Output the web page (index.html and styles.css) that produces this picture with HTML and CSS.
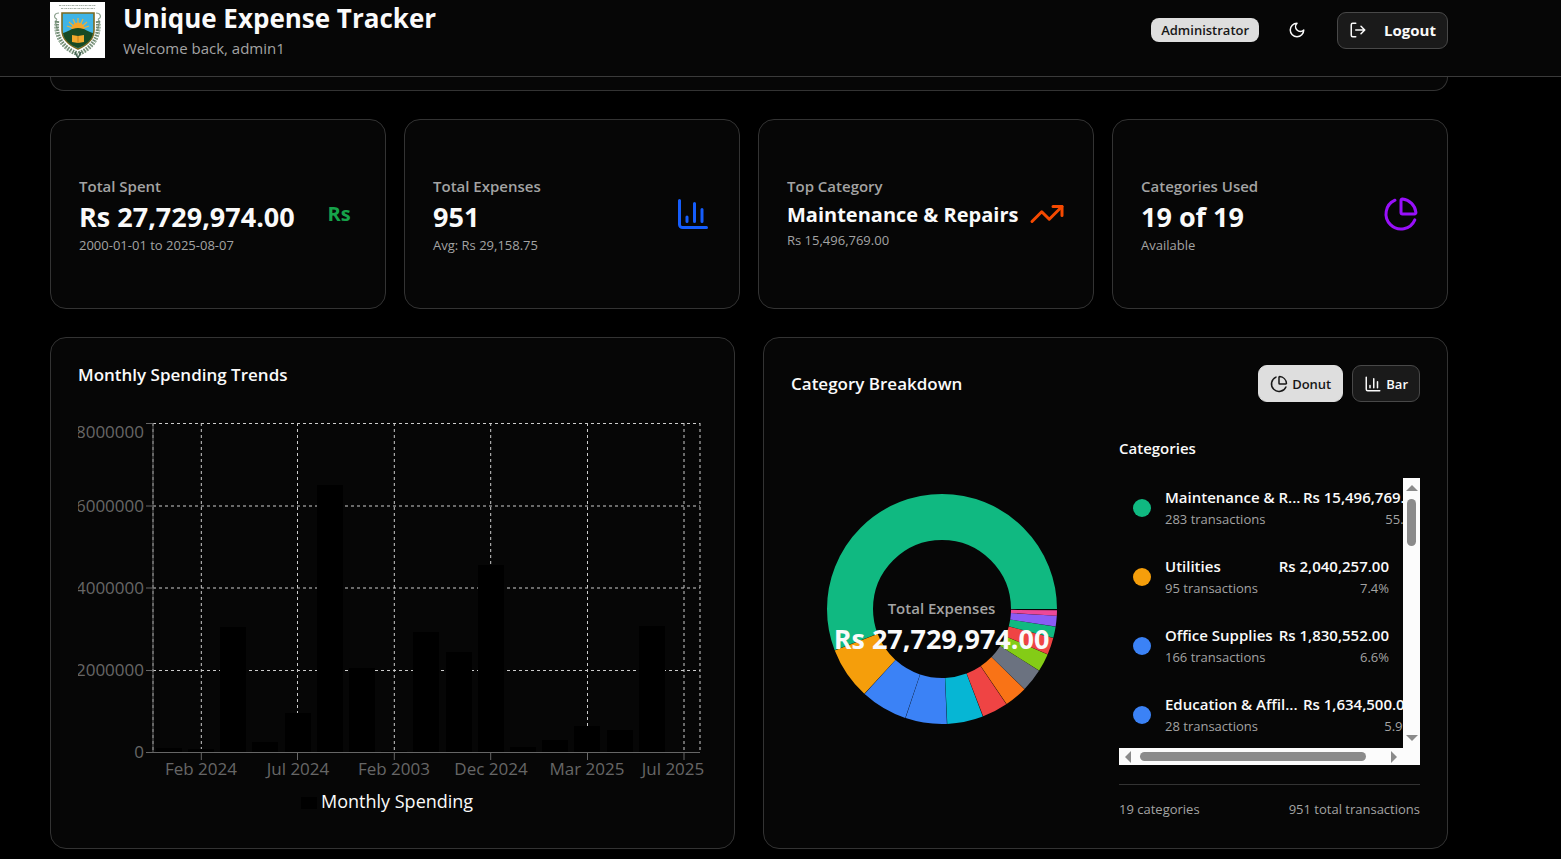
FILE: index.html
```html
<!DOCTYPE html>
<html lang="en">
<head>
<meta charset="utf-8">
<title>Unique Expense Tracker</title>
<meta name="viewport" content="width=device-width, initial-scale=1">
<link rel="stylesheet" href="styles.css">
</head>
<body>
<svg class="sprite" aria-hidden="true">
  <symbol id="i-bars" viewBox="0 0 24 24"><path d="M3 3v16a2 2 0 0 0 2 2h16M18 17V9M13 17V5M8 17v-3"/></symbol>
  <symbol id="i-pie" viewBox="0 0 24 24"><path d="M21 12c.552 0 1.005-.449.95-.998a10 10 0 0 0-8.953-8.951c-.55-.055-.998.398-.998.95v8a1 1 0 0 0 1 1z"/><path d="M21.21 15.89A10 10 0 1 1 8 2.83"/></symbol>
  <symbol id="i-trend" viewBox="0 0 24 24"><path d="M22 7l-8.5 8.5-5-5L2 17"/><path d="M16 7h6v6"/></symbol>
  <symbol id="i-moon" viewBox="0 0 24 24"><path d="M12 3a6 6 0 0 0 9 9 9 9 0 1 1-9-9Z"/></symbol>
  <symbol id="i-logout" viewBox="0 0 24 24"><path d="M9 21H5a2 2 0 0 1-2-2V5a2 2 0 0 1 2-2h4M16 17l5-5-5-5M21 12H9"/></symbol>
</svg>

<header class="topbar">
  <svg class="logo" viewBox="0 0 55 56" role="img" aria-label="School crest">
    <rect width="55" height="56" fill="#fff"/>
    <path d="M9 3.500h37M11 6.500h34" stroke="#a3afa4" stroke-width="1" stroke-dasharray="2 .7 1 .6"/>
    <g fill="none" stroke="#8fa391" stroke-width="1.200">
      <path d="M9 11c-5 0-6 5-2 6M46 11c5 0 6 5 2 6M7 17c-4 5 1 6 0 11M48 17c4 5-1 6 0 11"/>
    </g>
    <g fill="none" stroke="#6f8a72" stroke-width="4.500" stroke-dasharray="1.700 1.100">
      <path d="M7 19C5 34 12 46 28 52M48 19c2 15-5 27-20 33"/>
    </g>
    <g fill="none" stroke="#a9bcaa" stroke-width="1.500" stroke-dasharray="1 2">
      <path d="M5 22c0 13 6 23 18 29M50 22c0 13-6 23-18 29"/>
    </g>
    <path d="M25 50l3 6 3-6" fill="none" stroke="#3f5f50" stroke-width="1.500"/>
    <path d="M12 11h32v17c0 9-7 15-16 19-9-4-16-10-16-19z" fill="#3fb4e6" stroke="#7b6a20" stroke-width="1.600"/>
    <g stroke="#e9b23c" stroke-width="1.200"><path d="M28 28V16M28 28l-5-11M28 28l5-11M28 28l-9-8M28 28l9-8M28 28l-11-4M28 28l11-4"/></g>
    <circle cx="28" cy="27" r="6.500" fill="#f4a52a"/>
    <path d="M13 31c5-1 8-5 15-5s10 4 15 5c-1 7-7 12-15 15-8-3-14-8-15-15z" fill="#174a24"/>
    <path d="M22 33l6 1 6-1v7l-6 1-6-1z" fill="#f0a92d"/><path d="M28 34v7" stroke="#b77416" stroke-width=".8"/>
  </svg>
  <div class="brand">
    <h1>Unique Expense Tracker</h1>
    <p>Welcome back, admin1</p>
  </div>
  <span class="badge">Administrator</span>
  <button class="ghost" type="button" aria-label="Toggle theme"><svg class="icon"><use href="#i-moon"/></svg></button>
  <button class="btn logout" type="button"><svg class="icon"><use href="#i-logout"/></svg>Logout</button>
</header>

<main class="page">
  <div class="filters-end"></div>

  <section class="stats">
    <article class="card stat">
      <div><h3>Total Spent</h3><p class="value">Rs 27,729,974.00</p><p class="note">2000-01-01 to 2025-08-07</p></div>
      <span class="mark rupee">Rs</span>
    </article>
    <article class="card stat">
      <div><h3>Total Expenses</h3><p class="value">951</p><p class="note">Avg: Rs 29,158.75</p></div>
      <svg class="icon mark blue"><use href="#i-bars"/></svg>
    </article>
    <article class="card stat">
      <div><h3>Top Category</h3><p class="value small">Maintenance &amp; Repairs</p><p class="note">Rs 15,496,769.00</p></div>
      <svg class="icon mark orange"><use href="#i-trend"/></svg>
    </article>
    <article class="card stat">
      <div><h3>Categories Used</h3><p class="value">19 of 19</p><p class="note">Available</p></div>
      <svg class="icon mark purple"><use href="#i-pie"/></svg>
    </article>
  </section>

  <section class="panels">
    <article class="card panel">
      <h2>Monthly Spending Trends</h2>
      <svg class="trend" viewBox="0 0 629 408" role="img" aria-label="Monthly spending bar chart">
        <g class="grid">
          <path d="M75 17.500H622M75 100H622M75 182H622M75 264.500H622M75 346.500H622"/>
          <path d="M75 17V347M123.300 17V347M219.500 17V347M316.300 17V347M412.700 17V347M509.500 17V347M606 17V347M622 17V347"/>
        </g>
        <g class="axis"><path d="M75 17V347M75 346.500H622"/>
          <path d="M68 17.500h7M68 100h7M68 182h7M68 264.500h7M68 346.500h7M123.300 347v7M219.500 347v7M316.300 347v7M412.700 347v7M509.500 347v7M606 347v7"/></g>
        <g class="bars">
          <path d="M78 342h26v4H78zM110 343h26v3h-26zM142 221h26v125h-26zM174 336h26v10h-26zM207 307h26v39h-26zM239 79h26v267h-26zM271 262h26v84h-26zM303 345h26v1h-26zM335 226h26v120h-26zM368 246h26v100h-26zM400 159h26v187h-26zM432 341h26v5h-26zM464 334h26v12h-26zM496 320h26v26h-26zM529 324h26v22h-26zM561 220h26v126h-26z"/>
        </g>
        <g class="ticks end">
          <text x="66" y="32">8000000</text><text x="66" y="106">6000000</text><text x="66" y="188">4000000</text><text x="66" y="270">2000000</text><text x="66" y="352">0</text>
        </g>
        <g class="ticks mid">
          <text x="123" y="369">Feb 2024</text><text x="220" y="369">Jul 2024</text><text x="316" y="369">Feb 2003</text><text x="413" y="369">Dec 2024</text><text x="509" y="369">Mar 2025</text><text x="595" y="369">Jul 2025</text>
        </g>
        <rect class="key" x="223" y="391" width="16" height="12"/>
        <text class="legend" x="243" y="402">Monthly Spending</text>
      </svg>
    </article>

    <article class="card panel">
      <div class="panel-head">
        <h2>Category Breakdown</h2>
        <div class="toggle">
          <button class="btn chosen" type="button"><svg class="icon"><use href="#i-pie"/></svg>Donut</button>
          <button class="btn" type="button"><svg class="icon"><use href="#i-bars"/></svg>Bar</button>
        </div>
      </div>
      <div class="breakdown">
        <div class="donut">
          <svg viewBox="0 0 230 230" role="img" aria-label="Spending by category">
            <g class="ring" transform="translate(115 115) scale(1 -1)">
              <circle r="92" pathLength="360" stroke="#10b981" stroke-dasharray="201 159"/>
              <circle r="92" pathLength="360" stroke="#f59e0b" stroke-dasharray="26.300 333.700" stroke-dashoffset="-201.200"/>
              <circle r="92" pathLength="360" stroke="#3b82f6" stroke-dasharray="23.600 336.400" stroke-dashoffset="-227.700"/>
              <circle r="92" pathLength="360" stroke="#3b82f6" stroke-dasharray="21 339" stroke-dashoffset="-251.500"/>
              <circle r="92" pathLength="360" stroke="#06b6d4" stroke-dasharray="18.100 341.900" stroke-dashoffset="-272.700"/>
              <circle r="92" pathLength="360" stroke="#ef4444" stroke-dasharray="13 347" stroke-dashoffset="-291"/>
              <circle r="92" pathLength="360" stroke="#f97316" stroke-dasharray="11.600 348.400" stroke-dashoffset="-304.200"/>
              <circle r="92" pathLength="360" stroke="#6b7280" stroke-dasharray="11.600 348.400" stroke-dashoffset="-315.900"/>
              <circle r="92" pathLength="360" stroke="#84cc16" stroke-dasharray="9.100 350.900" stroke-dashoffset="-327.600"/>
              <circle r="92" pathLength="360" stroke="#ef4444" stroke-dasharray="8.500 351.500" stroke-dashoffset="-336.800"/>
              <circle r="92" pathLength="360" stroke="#10b981" stroke-dasharray="5.700 354.300" stroke-dashoffset="-345.400"/>
              <circle r="92" pathLength="360" stroke="#8b5cf6" stroke-dasharray="5.300 354.700" stroke-dashoffset="-351.200"/>
              <circle r="92" pathLength="360" stroke="#ec4899" stroke-dasharray="2.700 357.300" stroke-dashoffset="-356.600"/>
            </g>
          </svg>
          <div class="donut-label"><h3>Total Expenses</h3><p class="value">Rs 27,729,974.00</p></div>
        </div>

        <div class="categories">
          <h4>Categories</h4>
          <div class="scroller">
            <ul class="list">
              <li><i class="dot green"></i><div class="name"><b>Maintenance &amp; R...</b><span>283 transactions</span></div><div class="amount"><b>Rs 15,496,769.00</b><span>55.9%</span></div></li>
              <li><i class="dot amber"></i><div class="name"><b>Utilities</b><span>95 transactions</span></div><div class="amount"><b>Rs 2,040,257.00</b><span>7.4%</span></div></li>
              <li><i class="dot azure"></i><div class="name"><b>Office Supplies</b><span>166 transactions</span></div><div class="amount"><b>Rs 1,830,552.00</b><span>6.6%</span></div></li>
              <li><i class="dot azure"></i><div class="name long"><b>Education &amp; Affil...</b><span>28 transactions</span></div><div class="amount"><b>Rs 1,634,500.00</b><span>5.9%</span></div></li>
            </ul>
            <div class="bar-v"><i class="arrow up"></i><i class="thumb"></i><i class="arrow down"></i></div>
            <div class="bar-h"><i class="arrow left"></i><i class="thumb"></i><i class="arrow right"></i></div>
          </div>
          <div class="totals"><span>19 categories</span><span>951 total transactions</span></div>
        </div>
      </div>
    </article>
  </section>
</main>
</body>
</html>
```
FILE: styles.css
```css
:root {
  --surface: #060606;
  --line: #333;
  --text: #fafafa;
  --muted: #a3a3a3;
  --scroll: #8b8b8b;
}
* { box-sizing: border-box; }
body, h1, h2, h3, h4, p, ul { margin: 0; padding: 0; }
body {
  background: #000;
  color: var(--text);
  font-family: "Open Sans", "Noto Sans", sans-serif;
  font-size: 15px;
  line-height: 22px;
  overflow: hidden;
}
.sprite { display: none; }
.icon {
  width: 18px;
  height: 18px;
  flex: none;
  fill: none;
  stroke: currentColor;
  stroke-width: 2;
  stroke-linecap: round;
  stroke-linejoin: round;
}

.topbar {
  display: flex;
  align-items: center;
  height: 77px;
  padding: 0 113px 16px 50px;
  background: var(--surface);
  border-bottom: 1px solid #3a3a3a;
}
.logo { width: 55px; height: 56px; flex: none; margin-right: 18px; }
.brand { margin-right: auto; }
.brand h1 { font-size: 26px; line-height: 36px; font-weight: 700; }
.brand p { color: var(--muted); line-height: 24px; }
.badge {
  padding: 0 10px;
  border-radius: 8px;
  background: #dedede;
  color: #171717;
  font-size: 13px;
  line-height: 24px;
  font-weight: 600;
}
.ghost {
  display: flex;
  margin: 0 22px 0 20px;
  padding: 9px;
  border: 0;
  background: none;
  color: var(--text);
}
.btn {
  display: flex;
  align-items: center;
  gap: 4px;
  height: 37px;
  padding: 0 11px;
  border: 1px solid #484848;
  border-radius: 9px;
  background: #1a1a1a;
  color: var(--text);
  font: 600 13px/22px "Open Sans", "Noto Sans", sans-serif;
}
.btn.logout { gap: 17px; font-size: 15px; font-weight: 700; }
.btn.chosen { background: #dedede; border-color: #dedede; color: #171717; }

.page { padding: 0 113px 10px 50px; }
.filters-end {
  height: 14px;
  border: 1px solid var(--line);
  border-top: 0;
  border-radius: 0 0 14px 14px;
  background: var(--surface);
}
.card {
  border: 1px solid var(--line);
  border-radius: 16px;
  background: var(--surface);
}
.stats {
  display: grid;
  grid-template-columns: repeat(4, 1fr);
  gap: 18px;
  margin: 28px 0;
}
.stat {
  display: flex;
  justify-content: space-between;
  align-items: center;
  min-height: 190px;
  padding: 52px 28px;
}
.stat > div { min-height: 84px; white-space: nowrap; }
h3 { color: var(--muted); font-size: 15px; line-height: 28px; font-weight: 600; }
.value { font-size: 27px; line-height: 34px; font-weight: 700; }
.value.small { font-size: 20px; line-height: 29px; }
.note { color: var(--muted); font-size: 13px; line-height: 22px; }
.mark { width: 36px; height: 36px; flex: none; }
.rupee { color: #16a34a; font-size: 20px; line-height: 36px; font-weight: 700; text-align: center; }
.blue { color: #155dfc; }
.orange { color: #f54900; }
.purple { color: #9810fa; }

.panels { display: grid; grid-template-columns: 1fr 1fr; gap: 28px; }
.panel { min-height: 512px; padding: 27px; }
h2 { font-size: 17px; line-height: 20px; font-weight: 600; }
.trend { display: block; width: 100%; margin-top: 21px; overflow: hidden; }
.grid path { fill: none; stroke: #ccc; stroke-dasharray: 3 3; }
.axis path { fill: none; stroke: #666; }
.bars path, .key { fill: #000; }
.ticks { fill: #666; font-size: 17px; }
.end { text-anchor: end; }
.mid { text-anchor: middle; }
.legend { fill: var(--text); font-size: 18px; }

.panel-head { display: flex; justify-content: space-between; align-items: center; }
.toggle { display: flex; gap: 9px; }
.breakdown { display: grid; grid-template-columns: 1fr 1fr; gap: 27px; padding-top: 32px; }
.donut { display: grid; height: 350px; place-items: center; }
.donut > * { grid-area: 1 / 1; }
.donut svg { width: 230px; height: 230px; }
.ring circle { fill: none; stroke-width: 46; }
.donut-label { padding-top: 32px; text-align: center; white-space: nowrap; }
.categories { min-width: 0; }
.categories h4 { font-size: 15px; line-height: 28px; font-weight: 600; }
.scroller {
  display: grid;
  grid-template: 270px 17px / minmax(0, 1fr) 17px;
  margin-top: 16px;
  background: #fcfcfc;
}
.list { overflow: hidden; background: var(--surface); list-style: none; }
.list li { display: flex; align-items: center; height: 60px; margin-bottom: 9px; padding: 0 14px; white-space: nowrap; }
.dot { width: 18px; height: 18px; flex: none; margin-right: 14px; border-radius: 50%; }
.green { background: #10b981; }
.amber { background: #f59e0b; }
.azure { background: #3b82f6; }
.name, .amount { flex: none; }
.list li:first-child .name, .name.long { min-width: 138px; }
.amount { margin-left: auto; text-align: right; }
.list b, .list span { display: block; }
.list b { font-weight: 600; font-size: 15px; line-height: 22px; }
.list span, .totals { color: var(--muted); font-size: 13px; line-height: 22px; }
.bar-v, .bar-h { display: flex; align-items: center; padding: 7px 0; }
.bar-v { flex-direction: column; }
.bar-h { padding: 0 6px; }
.thumb { border-radius: 5px; background: var(--scroll); }
.bar-v .thumb { width: 9px; height: 47px; margin: 8px 0 auto; }
.bar-h .thumb { width: 83%; height: 9px; margin: 0 auto 0 9px; }
.arrow { width: 0; height: 0; border: 6px solid transparent; }
.up { border-top: 0; border-bottom-color: var(--scroll); }
.down { border-bottom: 0; border-top-color: var(--scroll); }
.left { border-left: 0; border-right-color: var(--scroll); }
.right { border-right: 0; border-left-color: var(--scroll); }
.totals {
  display: flex;
  justify-content: space-between;
  margin-top: 19px;
  padding-top: 13px;
  border-top: 1px solid var(--line);
}
```
